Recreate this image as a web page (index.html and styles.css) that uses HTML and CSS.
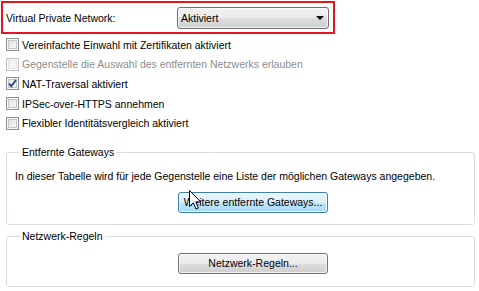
FILE: index.html
```html
<!DOCTYPE html>
<html lang="de">
<head>
    <meta charset="UTF-8">
    <title>VPN-Einstellungen</title>
    <link rel="stylesheet" href="styles.css">
</head>
<body>
    <div class="page">
        <div class="vpn-row">
            <span class="vpn-label">Virtual Private Network:</span>
            <div class="combo">
                <span>Aktiviert</span>
                <span class="combo-arrow"></span>
            </div>
        </div>

        <div class="options">
            <div class="option">
                <span class="check"></span>
                <span>Vereinfachte Einwahl mit Zertifikaten aktiviert</span>
            </div>
            <div class="option disabled">
                <span class="check"></span>
                <span>Gegenstelle die Auswahl des entfernten Netzwerks erlauben</span>
            </div>
            <div class="option">
                <span class="check checked">
                    <svg width="9" height="9" viewBox="0 0 9 9"><path d="M1 4.5 L3.3 7.2 L8 1" fill="none" stroke="#26408b" stroke-width="1.8"/></svg>
                </span>
                <span>NAT-Traversal aktiviert</span>
            </div>
            <div class="option">
                <span class="check"></span>
                <span>IPSec-over-HTTPS annehmen</span>
            </div>
            <div class="option">
                <span class="check"></span>
                <span>Flexibler Identitätsvergleich aktiviert</span>
            </div>
        </div>

        <fieldset class="group group-gateways">
            <legend>Entfernte Gateways</legend>
            <p class="group-text">In dieser Tabelle wird für jede Gegenstelle eine Liste der möglichen Gateways angegeben.</p>
            <div class="btn-row">
                <button class="btn hover">Weitere entfernte Gateways...</button>
            </div>
        </fieldset>

        <fieldset class="group group-rules">
            <legend>Netzwerk-Regeln</legend>
            <div class="btn-row">
                <button class="btn">Netzwerk-Regeln...</button>
            </div>
        </fieldset>
    </div>

    <!-- mouse pointer over the gateways button -->
    <svg class="cursor" width="13" height="21" viewBox="0 0 13 21">
        <path d="M0.5 0.5 L0.5 16.5 L4.3 12.8 L7 19 L9.4 18 L6.8 11.9 L11.8 11.9 Z" fill="#fff" stroke="#000" stroke-width="1" stroke-linejoin="miter"/>
    </svg>
</body>
</html>
```

FILE: styles.css
```css
body {
    margin: 0;
    background: #fff;
    font-family: "Liberation Sans", Arial, sans-serif;
    font-size: 10.5px;
    color: #000;
}

.page {
    position: relative;
    width: 479px;
    height: 291px;
    padding: 1px 0 0 1px;
    box-sizing: border-box;
    overflow: hidden;
}

/* top row with red highlight */
.vpn-row {
    display: flex;
    align-items: center;
    width: 334px;
    height: 33px;
    box-sizing: border-box;
    border: 2px solid #e5161e;
    padding-left: 3px;
}
.vpn-label {
    width: 171px;
}
.combo {
    display: flex;
    align-items: center;
    justify-content: space-between;
    width: 152px;
    height: 22px;
    box-sizing: border-box;
    border: 1px solid #707070;
    border-radius: 3px;
    padding: 0 4px 0 3px;
    background: linear-gradient(#f2f2f2 0%, #ebebeb 50%, #dddddd 51%, #cfcfcf 100%);
    box-shadow: inset 0 0 0 1px rgba(255, 255, 255, 0.7);
}
.combo-arrow {
    width: 0;
    height: 0;
    border-left: 4px solid transparent;
    border-right: 4px solid transparent;
    border-top: 4px solid #000;
    margin-top: 1px;
}

/* checkbox list */
.options {
    margin-top: 1px;
}
.option {
    display: flex;
    align-items: center;
    height: 19.6px;
    padding-left: 5px;
}
.option .check {
    margin-right: 3px;
}
.check {
    display: flex;
    align-items: center;
    justify-content: center;
    width: 13px;
    height: 13px;
    box-sizing: border-box;
    border: 1px solid #8e8f8f;
    background: linear-gradient(135deg, #d8dbe0 0%, #eeeff0 60%, #fafafa 100%);
    box-shadow: inset 0 0 0 1px #f6f6f6, inset 0 0 0 2px #c2c6cb;
}
.disabled {
    color: #8d8d8d;
}
.disabled .check {
    border-color: #bcbcbc;
    background: #f4f4f4;
    box-shadow: inset 0 0 0 1px #fff, inset 0 0 0 2px #e2e2e2;
}

/* group boxes */
.group {
    width: 469px;
    margin: 0 0 0 5px;
    box-sizing: border-box;
    border: 1px solid #d5dfe5;
    border-radius: 3px;
}
.group legend {
    margin-left: 5px;
    padding: 0 2px;
    line-height: 13px;
}
.group-gateways {
    margin-top: 13px;
    padding: 11px 0 11px 8px;
}
.group-rules {
    margin-top: 5px;
    padding: 10px 0 12px 8px;
}
.group-text {
    margin: 0;
    line-height: 13px;
}
.btn-row {
    display: flex;
    padding-left: 163px;
}
.group-gateways .btn-row {
    margin-top: 9px;
}

.btn {
    width: 150px;
    height: 21px;
    padding: 0;
    border: 1px solid #707070;
    border-radius: 3px;
    font-family: "Liberation Sans", Arial, sans-serif;
    font-size: 10.5px;
    color: #000;
    background: linear-gradient(#f2f2f2 0%, #ebebeb 50%, #dddddd 51%, #cfcfcf 100%);
    box-shadow: inset 0 0 0 1px rgba(255, 255, 255, 0.75);
}
.btn.hover {
    border-color: #3c7fb1;
    background: linear-gradient(#eaf6fd 0%, #d9f0fc 50%, #bee6fd 51%, #a7d9f5 100%);
}

.cursor {
    position: absolute;
    left: 189px;
    top: 190px;
}
```
